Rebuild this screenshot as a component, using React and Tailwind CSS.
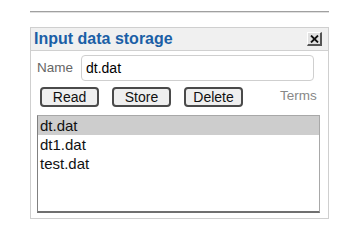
export default function App() {
  const files = ['dt.dat', 'dt1.dat', 'test.dat'];
  const selected = 'dt.dat';

  return (
    <div className="w-[358px] h-[232px] bg-white relative font-['Liberation_Sans',Arial,sans-serif]">
      {/* top rule */}
      <div className="absolute left-[30px] top-[11px] w-[299px] h-[2px] bg-[#a0a0a0] border-b border-[#e0e0e0]" />

      {/* panel */}
      <div className="absolute left-[30px] top-[27px] w-[299px] h-[192px] border border-[#cfcfcf] flex flex-col">
        <div className="h-[23px] bg-[#f0f0f0] border-b border-[#d0d0d0] flex items-center justify-between pl-[3px] pr-[6px]">
          <span className="text-[16px] font-bold text-[#1b5fa6] leading-none">Input data storage</span>
          <button className="w-[15px] h-[14px] bg-[#e0e0e0] border-r-2 border-b-2 border-[#555] border-t border-l border-t-white border-l-white flex items-center justify-center">
            <svg width="9" height="8" viewBox="0 0 9 8">
              <path d="M1 0.5 L8 7.5 M8 0.5 L1 7.5" stroke="#111" strokeWidth="1.8" />
            </svg>
          </button>
        </div>

        <div className="flex items-center pl-[6px] pt-[4px]">
          <span className="text-[13.5px] text-[#666] w-[44px]">Name</span>
          <div className="w-[233px] h-[26px] border border-[#cfcfcf] rounded-[4px] flex items-center px-[4px] text-[14px] text-black">
            dt.dat
          </div>
        </div>

        <div className="flex items-center pl-[9px] pt-[6px]">
          {['Read', 'Store', 'Delete'].map((b) => (
            <button
              key={b}
              className="w-[59px] h-[20px] mr-[13px] border-2 border-[#4a4a4a] rounded-[4px] bg-[#efefef] text-[14px] text-[#111] leading-none flex items-center justify-center"
            >
              {b}
            </button>
          ))}
          <span className="ml-[24px] text-[13.5px] text-[#888] -mt-[2px]">Terms</span>
        </div>

        <div className="ml-[6px] mt-[8px] w-[283px] h-[98px] border border-[#a8a8a8] border-l-[#808080] border-b-[#707070] border-b-2 flex flex-col">
          {files.map((f) => (
            <div
              key={f}
              className={`h-[19px] pl-[2px] text-[15px] text-[#111] leading-[19px] ${
                f === selected ? 'bg-[#cdcdcd]' : ''
              }`}
            >
              {f}
            </div>
          ))}
        </div>
      </div>
    </div>
  );
}
